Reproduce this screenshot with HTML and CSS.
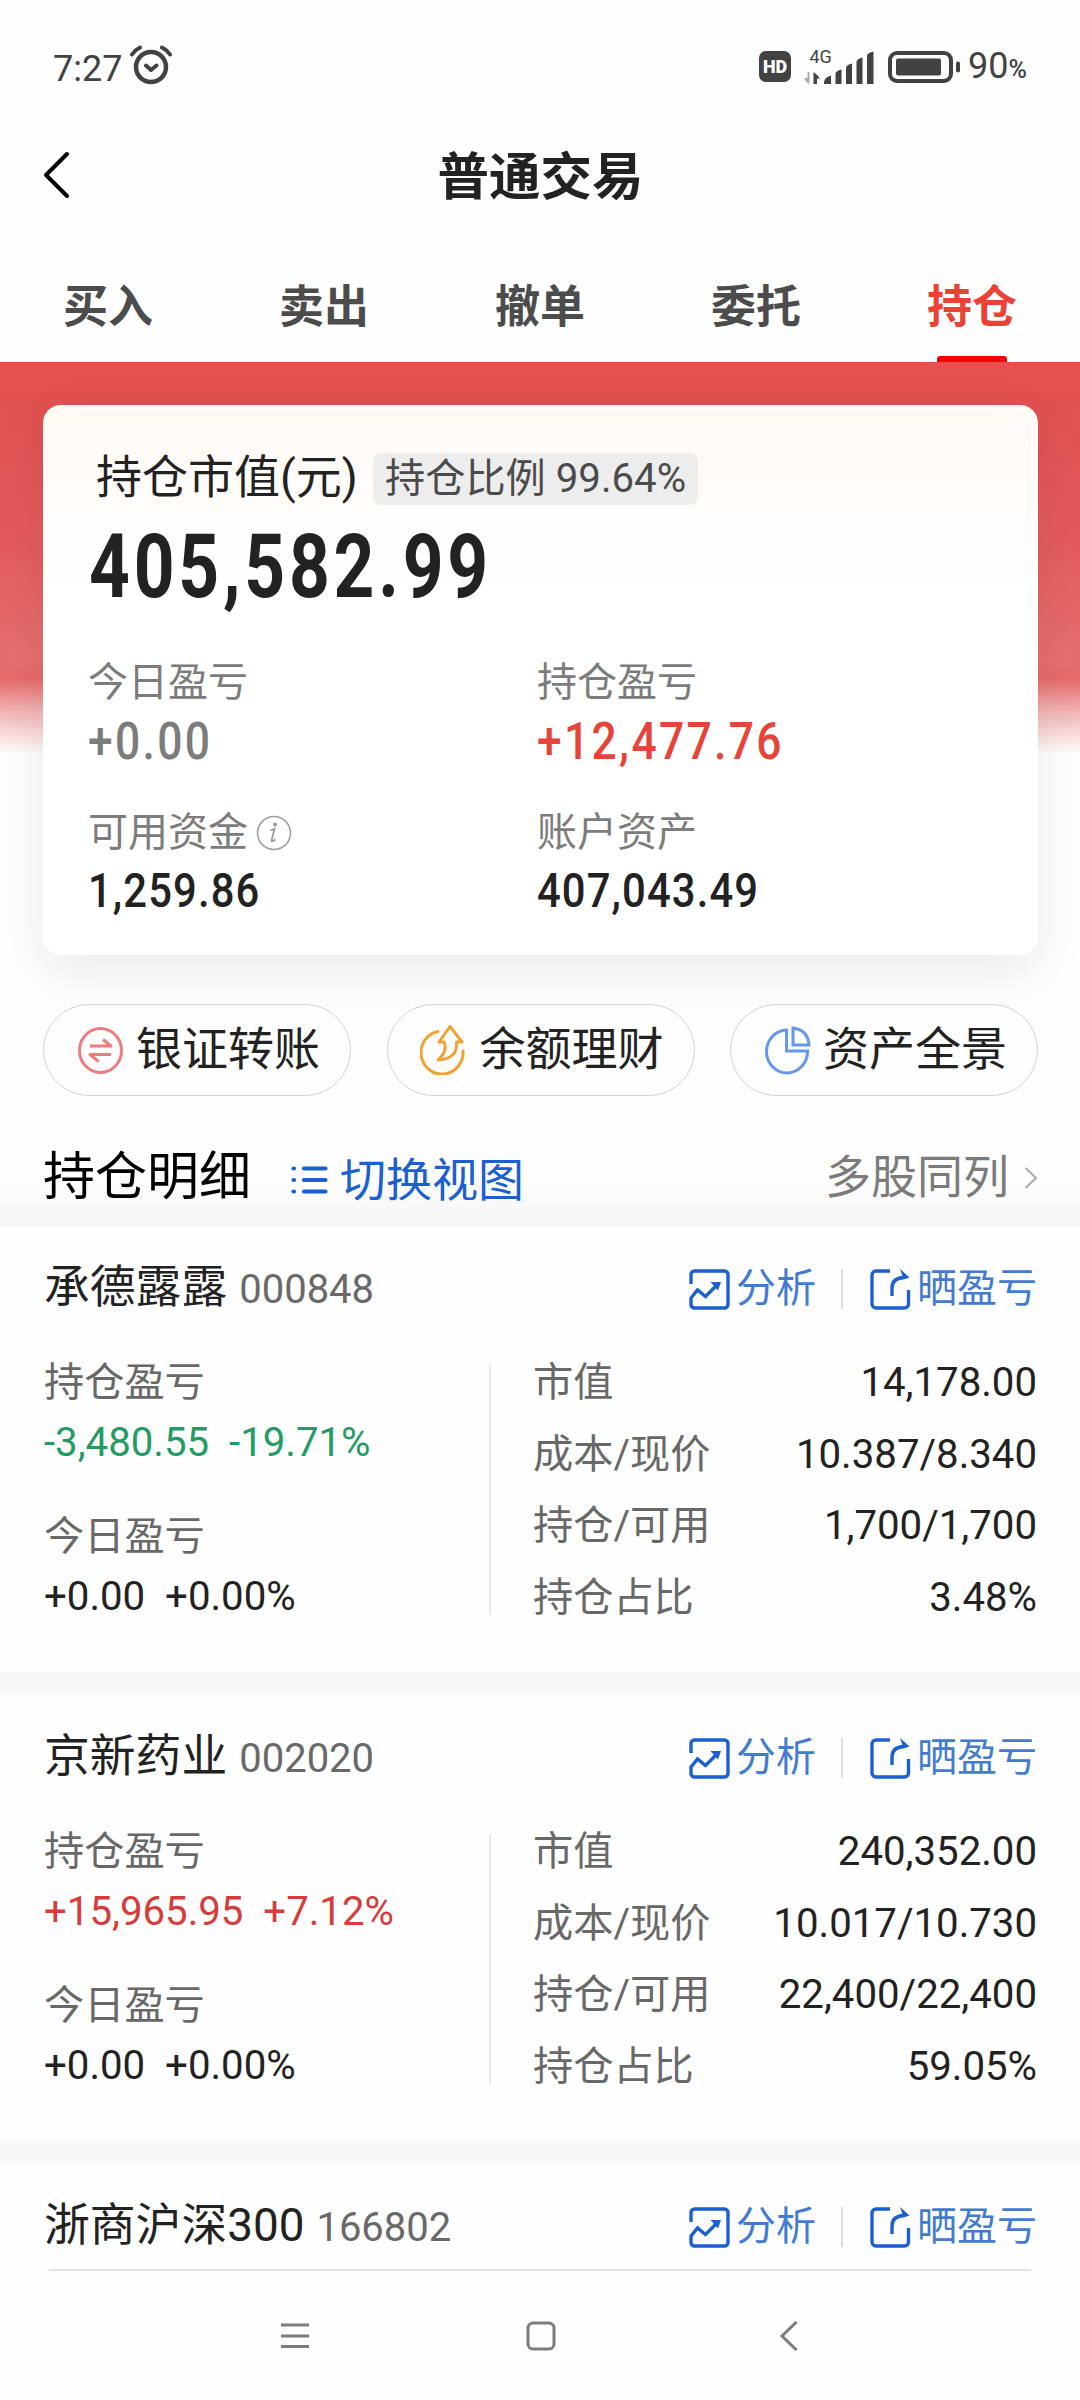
FILE: index.html
```html
<!DOCTYPE html>
<html lang="zh-CN">
<head>
<meta charset="utf-8">
<title>普通交易</title>
<link rel="stylesheet" href="styles.css">
</head>
<body>
<svg class="defs" width="0" height="0">
  <symbol id="i-analysis" viewBox="0 0 41 41">
    <path d="M2 15V5.500a3.500 3.500 0 0 1 3.500-3.500h30a3.500 3.500 0 0 1 3.500 3.500v30a3.500 3.500 0 0 1-3.500 3.500h-30a3.500 3.500 0 0 1-3.500-3.500V29L8.500 21l8 6.500L28 16" fill="none" stroke="#1b5fd0" stroke-width="3.400"/>
    <path d="M21.500 13H32L29 21.500z" fill="#1b5fd0"/>
  </symbol>
  <symbol id="i-share" viewBox="0 0 41 41">
    <path d="M20 2H6a4 4 0 0 0-4 4v29a4 4 0 0 0 4 4h28.500a4 4 0 0 0 4-4V21M22 27V19Q22 9 34 8.500" fill="none" stroke="#1b5fd0" stroke-width="3.400"/>
    <path d="M30 0L39.500 8.500Q34 11 29.500 10.500L32.500 7z" fill="#1b5fd0"/>
  </symbol>
</svg>

<header class="statusbar">
  <span class="time">7:27</span>
  <svg class="alarm" width="42" height="40" viewBox="0 0 42 40" fill="none" stroke="#424242" stroke-linecap="round" stroke-linejoin="round">
    <circle cx="21" cy="22" r="15" stroke-width="4.500"/>
    <path d="M2 9.500Q5 5 10 2.500M40 9.500Q37 5 32 2.500M16 20.500l5 4.500 5.500-4.500" stroke-width="4"/>
  </svg>
  <span class="hd">HD</span>
  <svg class="signal" width="71" height="40" viewBox="0 -4 71 40" fill="#424242">
    <text class="net" x="5.500" y="14">4G</text>
    <path d="M3.500 23h2v12q-4-2-5.500-6h3.500z" fill="#aaa"/>
    <path d="M9.500 35V23q3 2 6.500 6.500H13V35z"/>
    <path d="M20 35v-2q1-5 7-6.500V35zM31.500 35V25q0-3 6-4.500V35zM42 35V19q0-3 6-4.500V35zM52.500 35V13q0-3 6-4.500V35zM63 35V7q0-3 6.500-4.500V35z"/>
  </svg>
  <svg class="battery" width="73" height="32" viewBox="0 0 73 32">
    <rect x="2" y="2" width="61" height="28" rx="7" fill="none" stroke="#424242" stroke-width="4"/>
    <rect x="8" y="7.500" width="45" height="17" rx="2" fill="#424242"/>
    <rect x="68" y="10.500" width="4" height="11" rx="2" fill="#424242"/>
  </svg>
  <span class="percent">90<small>%</small></span>
</header>

<div class="titlebar">
  <svg width="28" height="48" viewBox="0 0 28 48" fill="none" stroke="#000" stroke-width="4" stroke-linecap="round" stroke-linejoin="round"><path d="M25 3L4 24l21 21"/></svg>
  <h1>普通交易</h1>
</div>

<nav class="tabs">
  <a>买入</a><a>卖出</a><a>撤单</a><a>委托</a><a class="active">持仓</a>
</nav>

<section class="overview">
  <div class="summary">
    <div class="summary-head"><span class="summary-title">持仓市值(元)</span><span class="chip">持仓比例 99.64%</span></div>
    <div class="total"><span class="num">405,582.99</span></div>
    <div class="stats">
      <div><div class="label">今日盈亏</div><div class="value muted"><span class="num">+0.00</span></div></div>
      <div><div class="label">持仓盈亏</div><div class="value up"><span class="num">+12,477.76</span></div></div>
      <div><div class="label">可用资金<svg class="info" width="36" height="36" viewBox="0 0 36 36"><circle cx="18" cy="18" r="16.500" fill="none" stroke="#a0a0a0" stroke-width="1.600"/><circle cx="19" cy="9.500" r="1.900" fill="#999"/><path d="M14.500 15.500l4-1.500-3 11.500q0 2 4-1" fill="none" stroke="#999" stroke-width="1.800"/></svg></div><div class="value small"><span class="num">1,259.86</span></div></div>
      <div><div class="label">账户资产</div><div class="value small"><span class="num">407,043.49</span></div></div>
    </div>
  </div>

  <div class="pills">
    <a class="pill"><svg width="47" height="50" viewBox="0 0 47 50" fill="none" stroke="#ee7b7d" stroke-width="3"><ellipse cx="23.500" cy="25.500" rx="21" ry="22"/><path d="M13 21h21L26 14.500M34 29.500H13l8.500 7" stroke-linejoin="round"/></svg><span>银证转账</span></a>
    <a class="pill"><svg width="47" height="50" viewBox="0 0 47 50" fill="none" stroke="#f0a232" stroke-width="3"><path d="M18 6.500A21 21.500 0 1 0 43 26" stroke-linecap="round"/><path d="M30 1.500L42 17H36.500Q38 34 18 35Q28 26 24 17H19z" stroke-linejoin="round"/></svg><span>余额理财</span></a>
    <a class="pill"><svg width="47" height="50" viewBox="0 0 47 50" fill="none" stroke="#6597ec" stroke-width="3"><path d="M22.500 5V26H43.500A20.500 21.500 0 1 1 22.500 5zM29 3V20H45Q44 5 29 3z"/></svg><span>资产全景</span></a>
  </div>

  <div class="section-head">
    <h2>持仓明细</h2>
    <a class="switch"><svg width="37" height="30" viewBox="0 0 37 30" stroke="#1b5fd0" stroke-width="4.200" stroke-linecap="round"><path d="M2.500 3.500h.5M2.500 15h.5M2.500 26.500h.5M13 3.500h21.500M13 15h21.500M13 26.500h21.500"/></svg>切换视图</a>
    <a class="multi">多股同列<svg width="14" height="24" viewBox="0 0 14 24" fill="none" stroke="#aaa" stroke-width="2"><path d="M1.500 2L12 12 1.500 22"/></svg></a>
  </div>
</section>

<main class="holdings">
  <article class="holding">
    <div class="holding-head"><span class="name">承德露露</span><span class="code">000848</span>
      <span class="actions"><svg width="41" height="41"><use href="#i-analysis"/></svg><a>分析</a><i></i><svg width="41" height="41"><use href="#i-share"/></svg><a>晒盈亏</a></span></div>
    <div class="holding-body">
      <div class="pnl"><p>持仓盈亏</p><p class="down">-3,480.55&nbsp; -19.71%</p><p>今日盈亏</p><p class="flat">+0.00&nbsp; +0.00%</p></div>
      <dl><dt>市值</dt><dd>14,178.00</dd><dt>成本/现价</dt><dd>10.387/8.340</dd><dt>持仓/可用</dt><dd>1,700/1,700</dd><dt>持仓占比</dt><dd>3.48%</dd></dl>
    </div>
  </article>
  <article class="holding">
    <div class="holding-head"><span class="name">京新药业</span><span class="code">002020</span>
      <span class="actions"><svg width="41" height="41"><use href="#i-analysis"/></svg><a>分析</a><i></i><svg width="41" height="41"><use href="#i-share"/></svg><a>晒盈亏</a></span></div>
    <div class="holding-body">
      <div class="pnl"><p>持仓盈亏</p><p class="gain">+15,965.95&nbsp; +7.12%</p><p>今日盈亏</p><p class="flat">+0.00&nbsp; +0.00%</p></div>
      <dl><dt>市值</dt><dd>240,352.00</dd><dt>成本/现价</dt><dd>10.017/10.730</dd><dt>持仓/可用</dt><dd>22,400/22,400</dd><dt>持仓占比</dt><dd>59.05%</dd></dl>
    </div>
  </article>
  <article class="holding last">
    <div class="holding-head"><span class="name">浙商沪深300</span><span class="code">166802</span>
      <span class="actions"><svg width="41" height="41"><use href="#i-analysis"/></svg><a>分析</a><i></i><svg width="41" height="41"><use href="#i-share"/></svg><a>晒盈亏</a></span></div>
  </article>
</main>

<footer class="sysnav">
  <svg width="30" height="30" viewBox="0 0 30 30" stroke="#7c7c7c" stroke-width="3"><path d="M1 4h28M1 15h28M1 25.500h28"/></svg>
  <svg width="30" height="30" viewBox="0 0 30 30" fill="none" stroke="#7c7c7c" stroke-width="3"><rect x="2" y="2" width="26" height="26" rx="5"/></svg>
  <svg width="20" height="30" viewBox="0 0 20 30" fill="none" stroke="#7c7c7c" stroke-width="3"><path d="M17.500 1L3 15l14.500 14"/></svg>
</footer>
</body>
</html>
```

FILE: styles.css
```css
* { box-sizing: border-box; }
body {
  margin: 0;
  width: 1080px;
  height: 2400px;
  overflow: hidden;
  display: flex;
  flex-direction: column;
  background: #fefefe;
  color: #222;
  font-family: Roboto, "Noto Sans CJK SC", sans-serif;
  font-size: 40px;
}
svg { display: block; flex: none; }
.defs { display: none; }
h1, h2, p, dl, dd { margin: 0; font-weight: 400; }

.statusbar {
  height: 100px;
  padding: 36px 53px 0 53px;
  display: flex;
  align-items: center;
  color: #424242;
}
.time { font-size: 36px; line-height: 64px; padding-top: 1px; }
.alarm { margin: -6px 0 0 8px; }
.hd {
  margin-left: auto;
  margin-top: -4px;
  width: 32px;
  height: 31px;
  border-radius: 7px;
  background: #424242;
  color: #fff;
  font-size: 18px;
  font-weight: 900;
  line-height: 32px;
  text-align: center;
}
.signal { margin: -7px 0 0 13px; }
.net { font: 18px Roboto, sans-serif; }
.battery { margin: -3px 0 0 13px; }
.percent { margin-left: 7px; font-size: 36px; line-height: 64px; }
.percent small { font-size: 25px; font-weight: 500; }

.titlebar {
  height: 154px;
  padding: 0 41px 4px 42px;
  display: grid;
  grid-template-columns: 28px 1fr 28px;
  align-items: center;
}
.titlebar h1 { font-size: 51.500px; font-weight: 700; line-height: 60px; padding-top: 7px; text-align: center; }

.tabs { height: 108px; display: grid; grid-template-columns: repeat(5, 1fr); }
.tabs a {
  display: flex;
  flex-direction: column;
  align-items: center;
  font-size: 45px;
  font-weight: 700;
  line-height: 108px;
  color: #4c4c4c;
}
.tabs .active { color: #ea4234; }
.active::after { content: ""; width: 70px; height: 6px; margin-top: -6px; border-radius: 3px 3px 0 0; background: #f60000; }

.overview {
  height: 865px;
  padding: 43px 42px 0 43px;
  background:
    linear-gradient(#fefefe00, #f5f5f5) bottom / 100% 50px no-repeat,
    linear-gradient(#e7504e 0, #e05151 45px, #e35b5c 180px, #e66f6f 295px, #e66a6a 316px, #f3b5b5 350px, #fefefe 392px);
}
.summary {
  height: 550px;
  padding: 48px 45px 0;
  border-radius: 18px;
  background: linear-gradient(#fff9f4, #fff 190px);
  box-shadow: 0 18px 54px rgba(0, 0, 0, .08);
}
.summary-head { display: flex; align-items: flex-start; padding-left: 8px; height: 52px; }
.summary-title { width: 277px; font-size: 46px; line-height: 48px; white-space: nowrap; }
.chip { height: 52px; padding: 0 12px; border-radius: 8px; background: #ededed; color: #4b4b4b; line-height: 51px; font-size: 40.200px; white-space: nowrap; }
.num { display: inline-block; transform-origin: 0 50%; font-kerning: none; }
.total { margin-top: 12px; height: 100px; padding-left: 1px; font-size: 88.500px; font-weight: 700; line-height: 100px; }
.total .num { transform: scaleX(.805); letter-spacing: 4.700px; }
.stats { margin-top: 38px; display: grid; grid-template-columns: 449px 1fr; row-gap: 34px; }
.label { display: flex; align-items: center; line-height: 56px; color: #7c7c7c; }
.info { margin-left: 8px; }
.value { height: 60px; line-height: 61px; font-size: 51px; font-weight: 500; }
.value .num { transform: scaleX(.87); letter-spacing: 2.700px; }
.value.muted { color: #7c7c7c; }
.value.up { color: #e6443a; }
.value.small { font-size: 48px; line-height: 59px; }
.value.small .num { letter-spacing: 1.300px; }

.pills { margin-top: 49px; display: grid; grid-template-columns: repeat(3, 308px); justify-content: space-between; }
.pill {
  height: 92px;
  padding-left: 33px;
  display: flex;
  align-items: center;
  gap: 12px;
  border: 1px solid #d2d2d2;
  border-radius: 46px;
  font-size: 46px;
  line-height: 60px;
}
.pill:nth-child(2) { padding-left: 32px; gap: 13px; }
.pill span { margin-top: -2px; }
.section-head { padding-top: 50px; display: flex; align-items: center; line-height: 60px; }
.section-head h2 { font-size: 52px; color: #000; }
.switch { margin: 4px 0 0 40px; display: flex; align-items: center; gap: 12px; font-size: 46px; color: #1b5fd0; }
.multi { margin: -2px 0 0 auto; display: flex; align-items: center; gap: 15px; font-size: 46px; color: #7b7b7b; }
.multi svg { margin-top: 3px; }

.holding { height: 469px; padding: 32px 43px 0 44px; border-bottom: 24px solid #f8f8f8; }
.holding-head { display: flex; align-items: baseline; line-height: 60px; height: 60px; }
.name { font-size: 45.800px; }
.code { margin-left: 12px; color: #696969; }
.actions { margin-left: auto; align-self: flex-start; height: 62px; display: flex; align-items: center; color: #427bd0; }
.actions a { margin-left: 6px; }
.actions i { width: 2px; height: 40px; margin: 0 27px 0 25px; background: #dcdcdc; }
.holding-body { margin-top: 28px; height: 288px; display: grid; grid-template-columns: 447px 1fr; align-items: center; }
.pnl { height: 250px; border-right: 2px solid #e8e8e8; display: flex; flex-direction: column; justify-content: center; font-size: 40.200px; }
.pnl p { line-height: 60px; flex: none; color: #686868; }
.pnl p:nth-child(3) { margin-top: 34px; }
.pnl .down { color: #229c64; }
.pnl .gain { color: #d63c3a; }
.pnl .flat { color: #222; }
dl { padding-left: 42px; display: grid; grid-template-columns: auto 1fr; line-height: 71.500px; font-size: 40.200px; }
dt { color: #686868; }
dd { text-align: right; }
.holding.last { height: 75px; padding-top: 0; border: 0; margin-top: 32px; }
.last::after { content: ""; display: block; height: 2px; margin: 13px 6px 0 5px; background: #e2e2e2; }

.sysnav { height: 129px; padding-left: 280px; display: flex; gap: 216px; align-items: center; }
.sysnav svg:last-child { margin-left: 7px; }
```
